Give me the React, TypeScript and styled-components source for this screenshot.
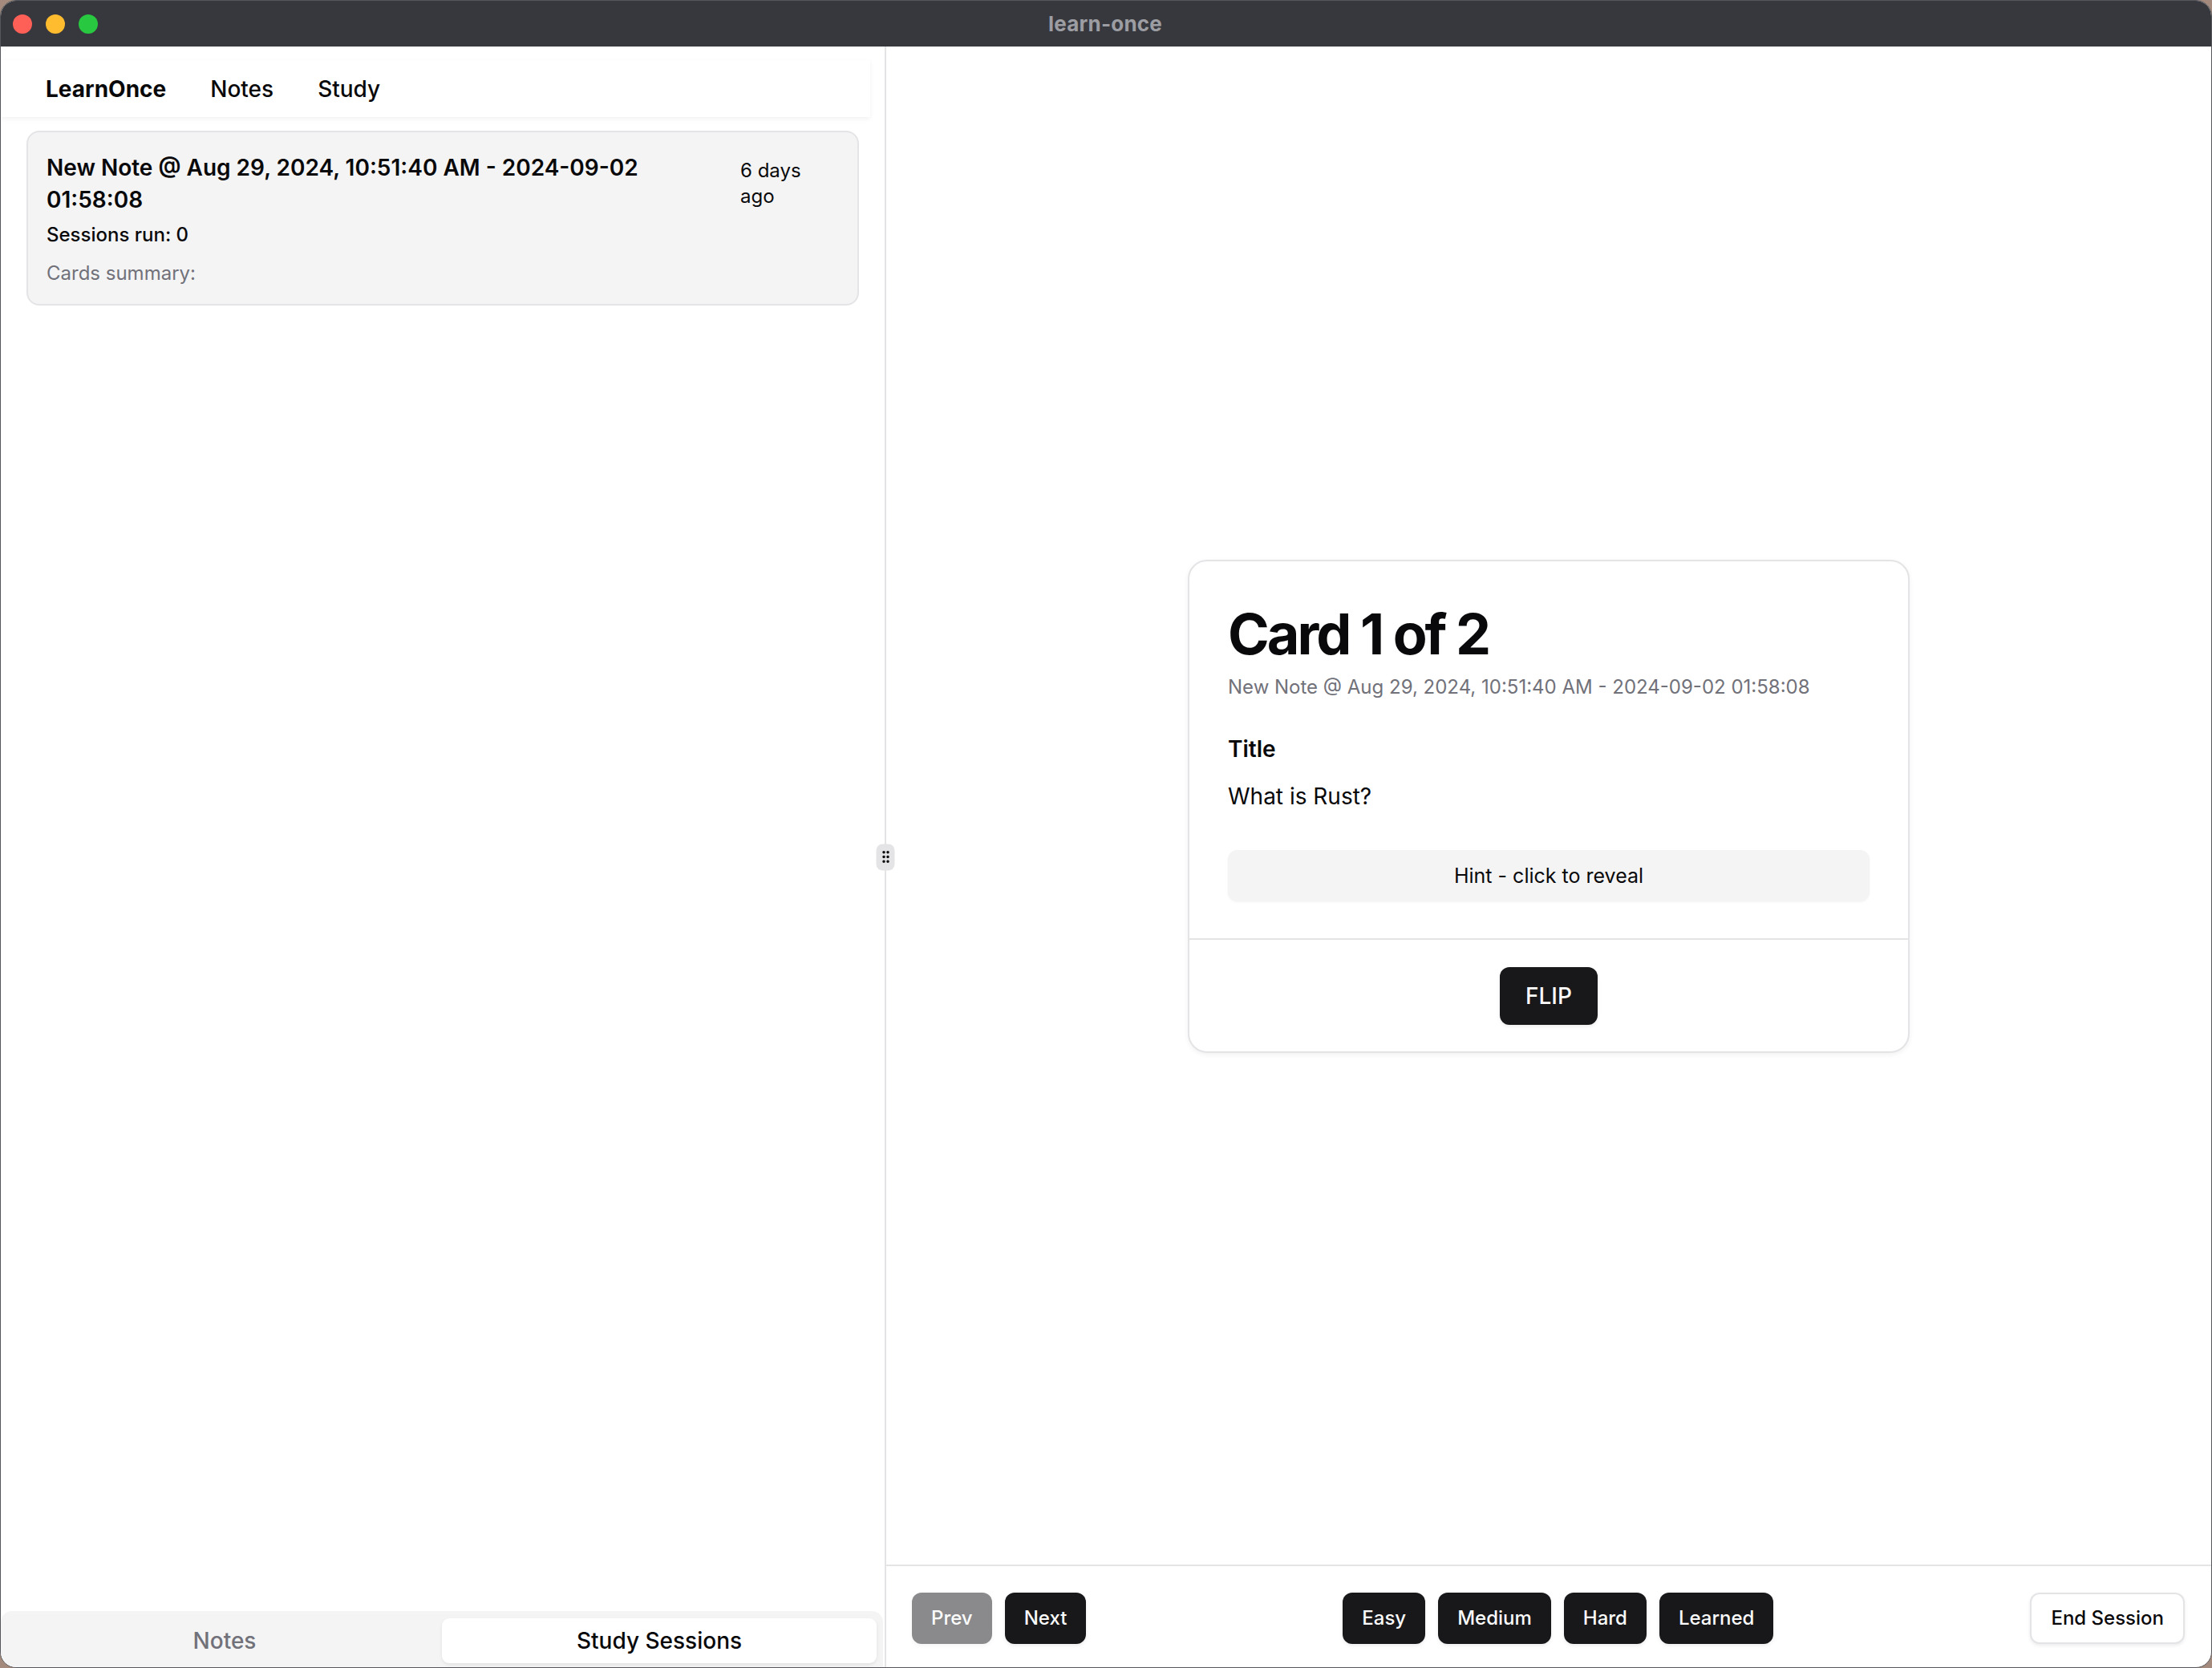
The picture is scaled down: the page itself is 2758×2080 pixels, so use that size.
import React from "react";
import styled, { createGlobalStyle } from "styled-components";
import { GripVertical } from "lucide-react";

const GlobalStyle = createGlobalStyle`
  html, body {
    margin: 0;
    padding: 0;
    width: 2758px;
    height: 2080px;
    overflow: hidden;
    background: #a48a7c;
  }
  #root { width: 2758px; height: 2080px; }
  * { box-sizing: border-box; }
`;

const Window = styled.div`
  width: 2758px;
  height: 2080px;
  display: flex;
  flex-direction: column;
  border-radius: 20px;
  overflow: hidden;
  background: #ffffff;
  border: 1px solid #56575c;
  font-family: Inter, "Noto Sans", sans-serif;
  color: #09090b;
`;

const TitleBar = styled.div`
  flex: 0 0 57px;
  display: grid;
  grid-template-columns: 1fr auto 1fr;
  align-items: center;
  background: #37383d;
`;

const Lights = styled.div`
  display: flex;
  gap: 17px;
  padding-left: 15px;
`;

const Light = styled.span<{ $color: string }>`
  width: 24px;
  height: 24px;
  border-radius: 50%;
  background: ${(p) => p.$color};
`;

const WindowTitle = styled.div`
  font-size: 26px;
  font-weight: 700;
  color: #9d9ea3;
  letter-spacing: 0.2px;
  transform: translateX(-1px);
`;

const Main = styled.div`
  flex: 1;
  display: flex;
  min-height: 0;
`;

const LeftPane = styled.div`
  flex: 0 0 1102px;
  display: flex;
  flex-direction: column;
  min-height: 0;
`;

const NavBar = styled.nav`
  flex: 0 0 71px;
  margin: 17px 18px 0 0;
  display: flex;
  align-items: center;
  gap: 55px;
  padding-left: 56px;
  background: #ffffff;
  box-shadow: 0 2px 6px rgba(0, 0, 0, 0.06);
`;

const NavItem = styled.span<{ $brand?: boolean }>`
  font-size: 28px;
  line-height: 40px;
  font-weight: ${(p) => (p.$brand ? 700 : 500)};
  color: #09090b;
`;

const NoteList = styled.div`
  flex: 1;
  padding: 17px 32px;
  display: flex;
  flex-direction: column;
  gap: 16px;
`;

const NoteCard = styled.div`
  background: #f4f4f5;
  border: 2px solid #e4e4e7;
  border-radius: 16px;
  padding: 24px 46px 22px 23px;
`;

const NoteHead = styled.div`
  display: grid;
  grid-template-columns: 1fr 100px;
  column-gap: 29px;
  align-items: start;
`;

const NoteTitle = styled.div`
  font-size: 28px;
  line-height: 40px;
  font-weight: 600;
`;

const NoteDate = styled.div`
  padding-top: 8px;
  font-size: 24px;
  line-height: 32px;
`;

const NoteMeta = styled.div<{ $muted?: boolean }>`
  margin-top: ${(p) => (p.$muted ? "16px" : "8px")};
  font-size: 24px;
  line-height: 32px;
  font-weight: ${(p) => (p.$muted ? 400 : 500)};
  color: ${(p) => (p.$muted ? "#71717a" : "#09090b")};
`;

const TabsList = styled.div`
  flex: 0 0 70px;
  margin-right: 2px;
  padding: 9px 8px 5px;
  display: grid;
  grid-template-columns: 1fr 1fr;
  background: #f4f4f5;
  border-radius: 14px 14px 0 0;
`;

const Tab = styled.div<{ $active?: boolean }>`
  display: flex;
  align-items: center;
  justify-content: center;
  border-radius: 9px;
  font-size: 28px;
  font-weight: 500;
  color: ${(p) => (p.$active ? "#09090b" : "#71717a")};
  background: ${(p) => (p.$active ? "#ffffff" : "transparent")};
  box-shadow: ${(p) => (p.$active ? "0 2px 4px rgba(0,0,0,0.08)" : "none")};
`;

const Divider = styled.div`
  flex: 0 0 2px;
  position: relative;
  background: #e4e4e7;
`;

const Handle = styled.div`
  position: absolute;
  top: 50%;
  left: 50%;
  transform: translate(-50%, -50%);
  width: 23px;
  height: 33px;
  border-radius: 8px;
  background: #e4e4e7;
  display: flex;
  align-items: center;
  justify-content: center;
  z-index: 2;
  color: #09090b;
`;

const RightPane = styled.div`
  flex: 1;
  display: flex;
  flex-direction: column;
  min-width: 0;
`;

const Stage = styled.div`
  flex: 1;
  display: flex;
  align-items: center;
  justify-content: center;
  padding-top: 2px;
`;

const StudyCard = styled.div`
  width: 900px;
  background: #ffffff;
  border: 2px solid #e4e4e7;
  border-radius: 24px;
  box-shadow: 0 2px 6px rgba(0, 0, 0, 0.06);
`;

const CardHeader = styled.div`
  padding: 51px 48px 41px;
  display: flex;
  flex-direction: column;
  gap: 10px;
`;

const CardHeading = styled.h2`
  margin: 0;
  font-size: 70px;
  line-height: 80px;
  font-weight: 700;
  letter-spacing: -3px;
`;

const CardSubtitle = styled.p`
  margin: 0;
  font-size: 24px;
  line-height: 32px;
  color: #71717a;
`;

const CardContent = styled.div`
  padding: 0 48px 46px;
`;

const FieldLabel = styled.div`
  font-size: 28px;
  line-height: 40px;
  font-weight: 600;
`;

const FieldValue = styled.div`
  margin-top: 19px;
  font-size: 28px;
  line-height: 40px;
`;

const Hint = styled.div`
  margin-top: 47px;
  height: 64px;
  display: flex;
  align-items: center;
  justify-content: center;
  background: #f4f4f5;
  border-radius: 12px;
  font-size: 25px;
  color: #09090b;
  box-shadow: 0 1px 3px rgba(0, 0, 0, 0.05);
`;

const CardFooter = styled.div`
  border-top: 2px solid #e4e4e7;
  padding: 34px 30px 33px;
  display: flex;
  justify-content: center;
`;

const Toolbar = styled.div`
  flex: 0 0 128px;
  border-top: 2px solid #e4e4e7;
  padding: 4px 33px 0 32px;
  display: flex;
  align-items: center;
  justify-content: space-between;
`;

const ButtonGroup = styled.div`
  display: flex;
  gap: 16px;
`;

const Button = styled.button<{ $variant?: "solid" | "outline"; $size?: "sm" | "md" }>`
  height: ${(p) => (p.$size === "md" ? "72px" : "64px")};
  padding: 0 ${(p) => (p.$size === "md" ? "32px" : "24px")};
  border-radius: 12px;
  font-family: Inter, "Noto Sans", sans-serif;
  font-size: ${(p) => (p.$size === "md" ? "28px" : "24px")};
  font-weight: 500;
  line-height: 1;
  cursor: pointer;
  background: ${(p) => (p.$variant === "outline" ? "#ffffff" : "#18181b")};
  color: ${(p) => (p.$variant === "outline" ? "#09090b" : "#fafafa")};
  border: ${(p) => (p.$variant === "outline" ? "2px solid #e4e4e7" : "none")};
  box-shadow: 0 2px 4px rgba(0, 0, 0, 0.08);
  &:disabled {
    opacity: 0.5;
    cursor: default;
  }
`;

export default function App() {
  return (
    <>
      <GlobalStyle />
      <Window>
        <TitleBar>
          <Lights>
            <Light $color="#fe5f57" />
            <Light $color="#febc2e" />
            <Light $color="#28c840" />
          </Lights>
          <WindowTitle>learn-once</WindowTitle>
          <div />
        </TitleBar>
        <Main>
          <LeftPane>
            <NavBar>
              <NavItem $brand>LearnOnce</NavItem>
              <NavItem>Notes</NavItem>
              <NavItem>Study</NavItem>
            </NavBar>
            <NoteList>
              <NoteCard>
                <NoteHead>
                  <NoteTitle>New Note @ Aug 29, 2024, 10:51:40 AM - 2024-09-02 01:58:08</NoteTitle>
                  <NoteDate>6 days ago</NoteDate>
                </NoteHead>
                <NoteMeta>Sessions run: 0</NoteMeta>
                <NoteMeta $muted>Cards summary:</NoteMeta>
              </NoteCard>
            </NoteList>
            <TabsList>
              <Tab>Notes</Tab>
              <Tab $active>Study Sessions</Tab>
            </TabsList>
          </LeftPane>
          <Divider>
            <Handle>
              <GripVertical size={20} strokeWidth={2.2} />
            </Handle>
          </Divider>
          <RightPane>
            <Stage>
              <StudyCard>
                <CardHeader>
                  <CardHeading>Card 1 of 2</CardHeading>
                  <CardSubtitle>New Note @ Aug 29, 2024, 10:51:40 AM - 2024-09-02 01:58:08</CardSubtitle>
                </CardHeader>
                <CardContent>
                  <FieldLabel>Title</FieldLabel>
                  <FieldValue>What is Rust?</FieldValue>
                  <Hint>Hint - click to reveal</Hint>
                </CardContent>
                <CardFooter>
                  <Button $size="md">FLIP</Button>
                </CardFooter>
              </StudyCard>
            </Stage>
            <Toolbar>
              <ButtonGroup>
                <Button disabled>Prev</Button>
                <Button>Next</Button>
              </ButtonGroup>
              <ButtonGroup>
                <Button>Easy</Button>
                <Button>Medium</Button>
                <Button>Hard</Button>
                <Button>Learned</Button>
              </ButtonGroup>
              <ButtonGroup>
                <Button $variant="outline">End Session</Button>
              </ButtonGroup>
            </Toolbar>
          </RightPane>
        </Main>
      </Window>
    </>
  );
}
